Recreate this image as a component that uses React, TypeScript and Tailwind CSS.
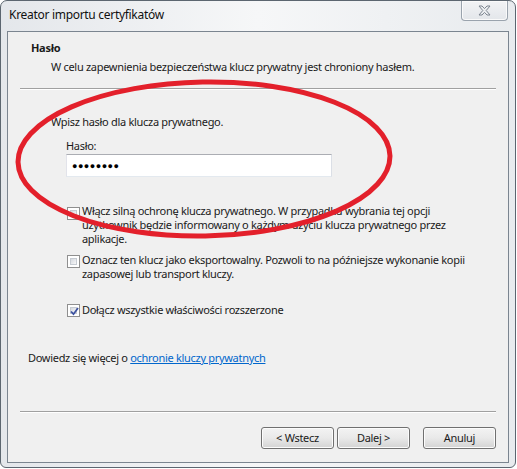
import React from "react";

const font = { fontFamily: '"Noto Sans", "Open Sans", sans-serif' };

function CheckBox({ checked }: { checked?: boolean }) {
  return (
    <div className="w-[13px] h-[13px] shrink-0 border border-[#8f8f8f] bg-white p-[2px]">
      <div className="w-full h-full border border-[#c6cbd2] bg-gradient-to-br from-[#d5d9df] to-[#f7f7f8] relative">
        {checked && (
          <svg viewBox="0 0 9 9" className="absolute left-[-1px] top-[-1px] w-[9px] h-[9px]">
            <path d="M1 4.5 L3.5 7.2 L8 1" fill="none" stroke="#3d52a0" strokeWidth="1.8" />
          </svg>
        )}
      </div>
    </div>
  );
}

function Btn({ label, className = "" }: { label: string; className?: string }) {
  return (
    <div
      className={
        "w-[73px] h-[22px] rounded-[3px] border border-[#707070] flex items-center justify-center text-[11px] tracking-[-0.3px] text-[#1a1a1a] bg-gradient-to-b from-[#f3f3f3] via-[#e9e9e9] to-[#d3d3d3] shadow-[inset_0_0_0_1px_#fcfcfc] " +
        className
      }
    >
      {label}
    </div>
  );
}

export default function App() {
  return (
    <div className="w-[517px] h-[469px] bg-white relative overflow-hidden" style={font}>
      <div className="w-[516px] h-[468px] rounded-t-[7px] rounded-b-[6px] border border-[#5c6670] bg-gradient-to-r from-[#e4e7eb] via-[#f6f7f8] to-[#e8ebee] flex flex-col px-[6px] pb-[4px]">
        {/* title bar */}
        <div className="h-[30px] flex items-start justify-between shrink-0">
          <div className="pt-[6px] pl-[2px] text-[12px] leading-[16px] tracking-[-0.3px] text-[#111]">Kreator importu certyfikatów</div>
          <div className="w-[47px] h-[20px] mr-[1px] rounded-b-[4px] border border-t-0 border-[#9aa3ad] bg-gradient-to-b from-[#f2f3f5] to-[#e3e6ea] flex items-center justify-center shadow-[inset_0_0_0_1px_#fafafa]">
            <svg width="13" height="11" viewBox="0 0 13 11">
              <path
                d="M1 1 H4 L6.5 3.6 L9 1 H12 L8.2 5.5 L12 10 H9 L6.5 7.4 L4 10 H1 L4.8 5.5 Z"
                fill="#eef0f2"
                stroke="#7c8590"
                strokeWidth="1"
                strokeLinejoin="round"
              />
            </svg>
          </div>
        </div>
        {/* client area */}
        <div className="flex-1 border border-[#7b8590] bg-[#f0f0f0] flex flex-col text-[11px] leading-[14px] tracking-[-0.3px] text-[#1a1a1a]">
          <div className="pt-[9px] pl-[23px] font-bold">Hasło</div>
          <div className="mt-[5px] pl-[43px]">W celu zapewnienia bezpieczeństwa klucz prywatny jest chroniony hasłem.</div>
          <div className="mt-[14px] mx-[12px] h-[1px] bg-[#a0a0a0] border-b border-white box-content" />
          <div className="pl-[43px] flex flex-col">
            <div className="mt-[25px]">Wpisz hasło dla klucza prywatnego.</div>
            <div className="mt-[10px] pl-[15px]">Hasło:</div>
            <div className="mt-[1px] ml-[15px] w-[266px] h-[23px] bg-white border border-[#abadb3] border-l-[#e2e3ea] border-r-[#dbdfe6] border-b-[#e3e9ef] flex items-center pl-[5px]">
              <span className="text-[9px] tracking-[0.5px] text-black">●●●●●●●●</span>
            </div>
            <div className="mt-[27px] ml-[16px] flex gap-[2px]">
              <div className="mt-[3px]"><CheckBox /></div>
              <div>
                Włącz silną ochronę klucza prywatnego. W przypadku wybrania tej opcji
                <br />
                użytkownik będzie informowany o każdym użyciu klucza prywatnego przez
                <br />
                aplikacje.
              </div>
            </div>
            <div className="mt-[7px] ml-[16px] flex gap-[2px]">
              <div className="mt-[2px]"><CheckBox /></div>
              <div>
                Oznacz ten klucz jako eksportowalny. Pozwoli to na późniejsze wykonanie kopii
                <br />
                zapasowej lub transport kluczy.
              </div>
            </div>
            <div className="mt-[22px] ml-[16px] flex gap-[2px]">
              <div className="mt-[1px]"><CheckBox checked /></div>
              <div>Dołącz wszystkie właściwości rozszerzone</div>
            </div>
          </div>
          <div className="mt-[34px] pl-[20px]">
            Dowiedz się więcej o <span className="text-[#0066cc] underline">ochronie kluczy prywatnych</span>
          </div>
          <div className="mt-[46px] mx-[12px] h-[1px] bg-[#a0a0a0] border-b border-white box-content" />
          <div className="mt-[14px] flex justify-end pr-[12px]">
            <Btn label="< Wstecz" />
            <Btn label="Dalej >" className="ml-[3px]" />
            <Btn label="Anuluj" className="ml-[13px]" />
          </div>
        </div>
      </div>
      {/* red hand-drawn ellipse overlay */}
      <svg className="absolute left-0 top-0 pointer-events-none" width="517" height="469" viewBox="0 0 517 469">
        <ellipse
          cx="204"
          cy="159"
          rx="186"
          ry="77"
          transform="rotate(-1 204 159)"
          fill="none"
          stroke="#e3202b"
          strokeWidth="5"
        />
      </svg>
    </div>
  );
}
